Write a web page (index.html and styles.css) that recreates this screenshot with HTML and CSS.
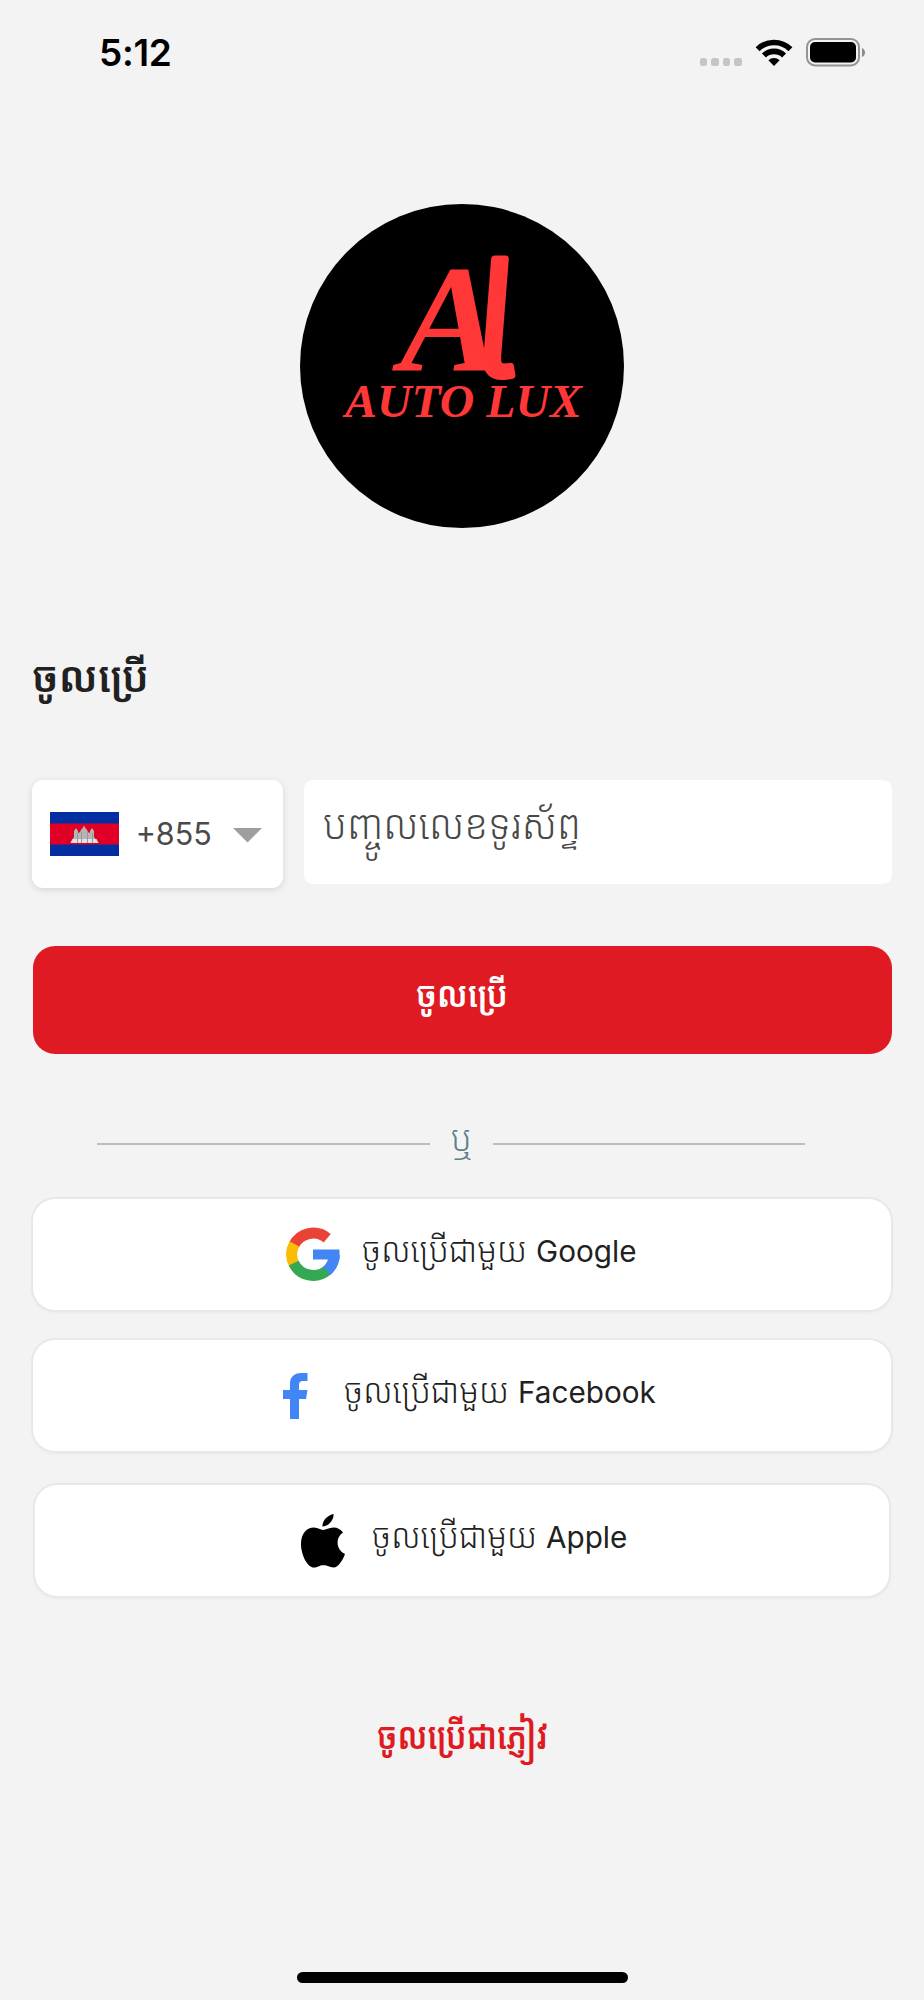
FILE: index.html
```html
<!DOCTYPE html>
<html lang="km">
<head>
<meta charset="utf-8">
<title>Auto Lux</title>
<link rel="stylesheet" href="styles.css">
</head>
<body>
<div class="screen">
  <header class="status">
    <span class="time">5:12</span>
    <div class="status-icons">
      <div class="dots"><i></i><i></i><i></i><i></i></div>
      <svg class="wifi" width="38" height="28" viewBox="0 0 38 28">
        <g fill="none" stroke="#000" stroke-width="5.600">
          <path d="M2.6 10.2a23.4 23.4 0 0 1 32.8 0"/>
          <path d="M8.9 16.5a14.4 14.4 0 0 1 20.2 0"/>
        </g>
        <path d="M13.4 21.2a8 8 0 0 1 11.2 0L19 27z"/>
      </svg>
      <svg class="battery" width="60" height="29" viewBox="0 0 60 29">
        <rect x="1" y="1" width="52" height="26.4" rx="8" fill="none" stroke="#949494" stroke-width="2"/>
        <rect x="4" y="4" width="46" height="20.400" rx="5"/>
        <path d="M56 10v9q3-1.500 3-4.500t-3-4.500z" fill="#8c8c8c"/>
      </svg>
    </div>
  </header>

  <svg class="logo" width="324" height="324" viewBox="0 0 324 324">
    <circle cx="162" cy="162" r="162"/>
    <g class="logo-text">
      <text x="100" y="165.500" font-size="152">A</text>
      <text class="logo-l" transform="translate(172 172) skewX(-4.500)" font-size="161">l</text>
      <text x="45" y="213" font-size="47" textLength="237" lengthAdjust="spacingAndGlyphs" class="logo-name">AUTO LUX</text>
    </g>
  </svg>

  <h1 class="title"><svg width="116" height="66"><text x="-1" y="43" textLength="117" lengthAdjust="spacingAndGlyphs">ចូលប្រើ</text></svg></h1>

  <div class="phone-row">
    <div class="country">
      <svg width="69" height="44" viewBox="0 0 69 44">
        <path fill="#032ea1" d="M0 0h69v44H0z"/>
        <path fill="#e00025" d="M0 11.500h69v21H0z"/>
        <path fill="#b5b5b5" d="M20.500 31l3.500-6V19l2-3 2 3v2l2-1 1.500-3 1-.5 1.500-3 1.500 3 1 .5 1.500 3 2 1v-2l2-3 2 3v6l4.500 6z"/>
        <path fill="#e3e3e3" d="M20.500 31l2-4h24l2 4z"/>
        <path stroke="#999" fill="none" d="M27.500 21v10m4-11v11m6-11v11m5-10v10"/>
      </svg>
      <span>+855</span>
      <svg class="caret" width="29" height="15" viewBox="0 0 29 15"><path d="M0 0h29L14.500 14.500z" fill="#9e9e9e"/></svg>
    </div>
    <div class="phone"><svg width="256" height="80"><text x="-1" y="46.500" textLength="258" lengthAdjust="spacingAndGlyphs">បញ្ចូលលេខទូរស័ព្ទ</text></svg></div>
  </div>

  <div class="submit"><svg width="90" height="70"><text x="-1" y="42" textLength="92" lengthAdjust="spacingAndGlyphs">ចូលប្រើ</text></svg></div>

  <div class="divider"><hr class="left"><svg width="21" height="50"><text x="0" y="33" textLength="22" lengthAdjust="spacingAndGlyphs">ឬ</text></svg><hr class="right"></div>

  <div class="social google">
    <svg class="mark" width="54" height="55" viewBox="0 0 54 55">
      <g fill="none" stroke-width="11">
        <path stroke="#ea4335" d="M41.200 11.200A21.700 21.700 0 0 0 7.700 18.500"/>
        <path stroke="#fbbc05" d="M8.400 16.800a21.700 21.700 0 0 0 0 21"/>
        <path stroke="#34a853" d="M7.700 36.200a21.700 21.700 0 0 0 33.500 7.200"/>
        <path stroke="#4285f4" d="M40.800 43.800a21.700 21.700 0 0 0 7.500-16"/>
      </g>
      <path fill="#4285f4" d="M27 22.500h26.500v10H27z"/>
    </svg>
    <svg class="khmer" width="164" height="70"><text x="0" y="43.500" textLength="165" lengthAdjust="spacingAndGlyphs">ចូលប្រើជាមួយ</text></svg>
    <span>Google</span>
  </div>
  <div class="social facebook">
    <svg class="mark" width="25" height="46" viewBox="0 0 25 46">
      <path fill="#4285f4" d="M7 46V26H0v-9h7v-6C7 4 11 0 18 0h6.500v8H20c-3 0-4 1.500-4 4v5h8.500L23 26h-7v20z"/>
    </svg>
    <svg class="khmer" width="164" height="70"><text x="0" y="43.500" textLength="165" lengthAdjust="spacingAndGlyphs">ចូលប្រើជាមួយ</text></svg>
    <span>Facebook</span>
  </div>
  <div class="social apple">
    <svg class="mark" width="44" height="54" viewBox="0 0 44 54">
      <path d="M32.500 0c.8 5-4.500 12.500-11 12.500C21 6.500 27 1 32.500 0zM22 16c3 0 6-2.500 10.500-2.500 4 0 7.500 2 9.500 5C34 23.500 35 36 44 40c-2 5.500-6.500 13.500-11.500 13.500-4 0-5.500-2.200-10-2.200-4.300 0-6 2.300-9.500 2.300C6.500 53.500 0 41 0 30c0-11 6-16.500 13-16.500 4 0 6.500 2.500 9 2.500z"/>
    </svg>
    <svg class="khmer" width="164" height="70"><text x="0" y="43.500" textLength="165" lengthAdjust="spacingAndGlyphs">ចូលប្រើជាមួយ</text></svg>
    <span>Apple</span>
  </div>

  <div class="guest"><svg width="170" height="80"><text x="0" y="49.500" textLength="171" lengthAdjust="spacingAndGlyphs">ចូលប្រើជាភ្ញៀវ</text></svg></div>
  <div class="home"></div>
</div>
</body>
</html>
```

FILE: styles.css
```css
* { box-sizing: border-box; }
body { margin: 0; background: #f3f3f3; }
.screen {
  width: 924px; height: 2000px; overflow: hidden;
  display: flex; flex-direction: column;
  font-family: Inter, "Noto Sans Khmer", "Khmer OS", "Noto Sans", sans-serif;
  color: #212121;
}
svg { display: block; flex: none; overflow: visible; }
.status { height: 106px; padding: 0 58px 0 99px; display: flex; justify-content: space-between; align-items: center; }
.time { font-size: 37px; font-weight: 600; color: #000; letter-spacing: -.3px; line-height: 1; margin-top: -1px; }
.status-icons { display: flex; align-items: center; margin-top: -1px; }
.dots { display: flex; gap: 4px; margin: 19px 13px 0 0; }
.dots i { width: 7.600px; height: 8px; border-radius: 2.500px; background: #c5c5c5; }
.wifi { margin-right: 13px; }
.logo { margin: 98px auto 0; }
.logo-text { fill: #ff3737; font-family: "Liberation Serif", serif; font-style: italic; font-weight: 700; }
.logo-l {
  font-family: Inter, sans-serif; font-style: normal; font-weight: 300; font-feature-settings: "cv05" 1;
  stroke: #ff3737; stroke-width: 7px; stroke-linejoin: round;
}
.title { margin: 121px 0 0 33px; height: 66px; font-size: 42px; font-weight: 600; }
.title text, .social text { fill: #212121; }
.phone-row { margin: 65px 32.500px 0 32px; height: 108px; display: flex; gap: 21.500px; }
.country {
  width: 250.500px; height: 108px; padding: 0 20px 0 18px; border-radius: 11px; background: #fff;
  box-shadow: 0 2px 7px rgba(0,0,0,.12); display: flex; align-items: center; justify-content: space-between;
}
.country span { font-size: 30.500px; color: #4a4a4a; margin-left: -5px; margin-top: -1px; }
.country .caret { margin-top: 2px; }
.phone { flex: 1; height: 104px; padding: 12px 20px; border-radius: 9px; background: #fff; font-size: 40.500px; font-weight: 350; }
.phone text { fill: #484848; }
.submit { margin: 58px 32.500px 0; height: 108px; border-radius: 22px; background: #e01a22; display: flex; justify-content: center; padding-top: 19px; font-size: 35px; font-weight: 600; }
.submit text { fill: #fff; }
.divider { height: 50px; margin: 64px 119px 0 97px; display: flex; align-items: center; font-size: 35px; font-weight: 350; }
.divider text { fill: #607d8b; }
.divider hr { border: 0; height: 2px; margin: 2px 0 0; background: #b6bfc3; }
.divider .left { width: 333px; margin-right: 21px; }
.divider .right { flex: 1; margin-left: 21px; }
.social {
  height: 111px; margin: 31px 33px 0; display: flex; align-items: center;
  border-radius: 22px; background: #fff; box-shadow: 0 0 0 2px #e8e8e8, 0 2px 4px rgba(0,0,0,.06); font-size: 34px;
}
.social .khmer { margin-top: -4px; font-weight: 350; }
.social span { font-size: 29.700px; margin-left: 10px; margin-top: -8px; }
.google .mark { margin-left: 253px; margin-right: 22px; margin-top: -1px; }
.facebook { margin-top: 30px; }
.facebook .mark { margin-left: 250px; margin-right: 36px; }
.apple { margin: 34px 35px 0; }
.apple .mark { margin-left: 266px; margin-right: 27px; }
.guest { margin: 103px auto 0; width: 170px; height: 80px; font-size: 37px; font-weight: 600; }
.guest text { fill: #e01a22; }
.home { width: 331px; height: 11px; border-radius: 6px; background: #000; margin: auto auto 17px; }
```
